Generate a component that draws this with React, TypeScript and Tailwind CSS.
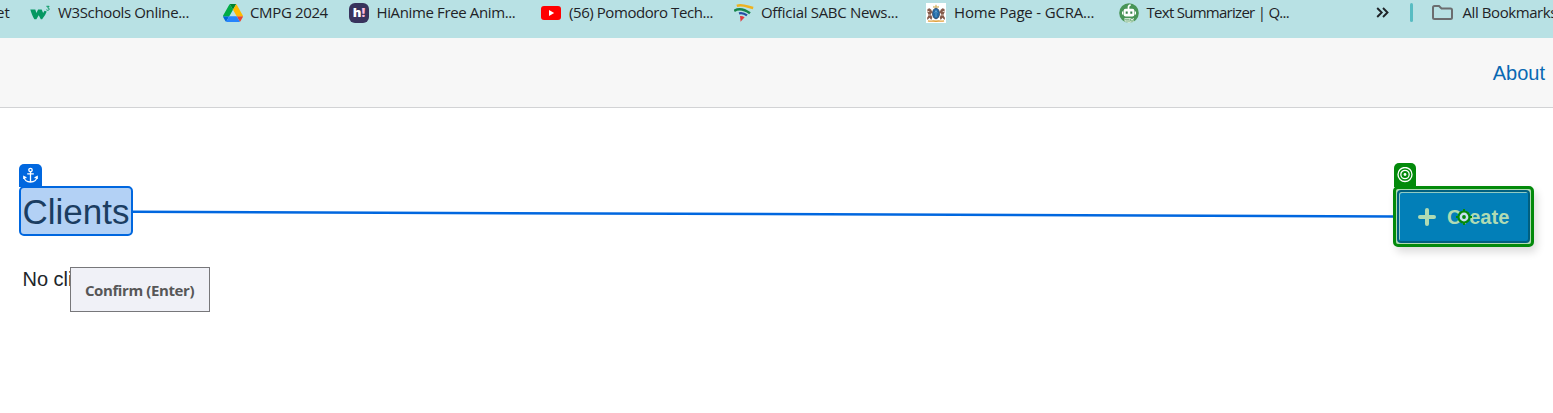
import type { ReactNode } from "react";

type Bookmark = { label: string; icon: ReactNode; width: string; tracking: string };

const W3Icon = () => (
  <svg width="20" height="20" viewBox="0 0 20 20" fill="none">
    <path d="M.3 6.500h5l1.100 3.600 1.700-3.600h3.600l1.400 3.600 1.400-2.300 2.200.8-1.600 3.500-3 4.200h-1.300l-2.100-4-2.300 4H4.400C2.500 13.500 1.300 9.500.3 6.500z" fill="#059862" />
    <path d="M16.400 3.300h2.700l-1.400 1.600c2.200 0 1.900 2.600-.2 2.400-.5 0-.9-.3-1.200-.7" stroke="#059862" strokeWidth="1" />
  </svg>
);

const DriveIcon = () => (
  <svg width="20" height="20" viewBox="0 0 87.3 78">
    <path d="m6.6 66.85 3.85 6.65c.8 1.4 1.95 2.5 3.3 3.3l13.75-23.8H0c0 1.55.4 3.1 1.2 4.5z" fill="#0066da" />
    <path d="M43.65 25 29.9 1.2c-1.35.8-2.5 1.9-3.3 3.3L1.2 48.5C.4 49.9 0 51.45 0 53h27.5z" fill="#00ac47" />
    <path d="M73.55 76.8c1.35-.8 2.5-1.9 3.3-3.3l9.25-16c.8-1.4 1.2-2.95 1.2-4.5H59.8l5.85 11.5z" fill="#ea4335" />
    <path d="M43.65 25 57.4 1.2C56.05.4 54.5 0 52.9 0H34.4c-1.6 0-3.15.45-4.5 1.2z" fill="#00832d" />
    <path d="M59.8 53H27.5L13.75 76.8c1.35.8 2.9 1.2 4.5 1.2h50.8c1.6 0 3.15-.45 4.5-1.2z" fill="#2684fc" />
    <path d="M73.4 26.5 60.7 4.5c-.8-1.4-1.95-2.5-3.3-3.3L43.65 25 59.8 53h27.45c0-1.55-.4-3.1-1.2-4.5z" fill="#ffba00" />
  </svg>
);

const AnimeIcon = () => (
  <span className="flex h-5 w-5 items-center justify-center rounded-[6px] bg-[#38335d] pb-px font-['Open_Sans',sans-serif] text-[13px] leading-none font-extrabold text-white">
    h<span className="text-[#ffbade]">!</span>
  </span>
);

const VideoIcon = () => (
  <svg width="20" height="20" viewBox="0 0 20 20">
    <rect y="3" width="20" height="14" rx="3" fill="#f00" />
    <path d="M8 7v6l5.2-3z" fill="#fff" />
  </svg>
);

const SabcIcon = () => (
  <svg width="20" height="20" viewBox="0 0 20 20" fill="none">
    <path d="M2.800 2.800C8 .8 13 3.600 19.200 5" stroke="#eeb220" strokeWidth="2.500" />
    <path d="M.2 7.800C5 5 10.500 6.300 16 10.300" stroke="#16854b" strokeWidth="2.500" />
    <path d="M5 10.400c2.800-.8 5.300 0 8 2" stroke="#264fa5" strokeWidth="2.300" />
    <path d="M6 13c1.800-.2 3 .2 4.600 1.200L6.600 18.800z" fill="#e13b41" />
  </svg>
);

const CrestIcon = () => (
  <svg width="20" height="20" viewBox="0 0 20 20" fill="none">
    <path fill="#fff" d="M0 0h20v20H0z" />
    <path d="m7 4.800.2-2 1.500.7L10 1.200l1.300 2.300 1.500-.7.2 2z" fill="#dcc17c" />
    <path d="m1.500 6 2-.8 1.800 1.500 1 2.500-1.500 2 1.500 3.300-1 2.500-1.800-2.200L1.500 17 1 15l1.700-3L1.300 9zM18.500 6l-2-.8-1.800 1.500-1 2.500 1.500 2-1.500 3.300 1 2.500 1.800-2.200 2 2.200.5-2-1.700-3 1.400-3z" fill="#855b4b" />
    <path d="M1.300 8.500h2M16.700 8.500h2M3.200 12h1.500M15.300 12h1.500" stroke="#e4d4c9" />
    <ellipse cx="10" cy="10.500" rx="3.500" ry="5.300" fill="#236ba8" stroke="#303c55" strokeWidth=".8" />
    <path d="M10 7v7M8.500 9.500 10 8l1.500 1.500" stroke="#64a5d2" strokeWidth=".8" />
    <path d="M2 17.800c3 1 4-.3 8 .5 4-.8 5 .5 8-.5" stroke="#e1a03b" strokeWidth="1.400" />
  </svg>
);

const BotIcon = () => (
  <svg width="20" height="20" viewBox="0 0 20 20" fill="none">
    <circle cx="10" cy="10" r="9.800" fill="#499557" />
    <path d="M9.500 6V4q0-1.700 2.200-2" stroke="#fff" strokeWidth="1.700" />
    <rect x="4.600" y="5.800" width="10.800" height="7.800" rx="2" fill="#fff" />
    <path d="M3.600 8.500v3M16.400 8.500v3" stroke="#fff" strokeWidth="1.200" />
    <path d="M7.700 8.500v2.300M12.300 8.500v2.300" stroke="#38814a" strokeWidth="2" />
    <path d="M5.500 15h9.500v3.500L10 20l-4.500-1.500z" fill="#e2f0e3" />
    <path d="M6 16.300h4.500M6.500 18h5" stroke="#499557" strokeWidth=".7" />
    <circle cx="13" cy="16.700" r="1.500" stroke="#499557" strokeWidth=".8" />
  </svg>
);

const bookmarks: Bookmark[] = [
  { label: "W3Schools Online...", icon: <W3Icon />, width: "w-[193px]", tracking: "tracking-[-0.36px]" },
  { label: "CMPG 2024", icon: <DriveIcon />, width: "w-[126px]", tracking: "tracking-[-0.36px] -ml-px" },
  { label: "HiAnime Free Anim...", icon: <AnimeIcon />, width: "w-[192px]", tracking: "tracking-[-0.37px] -ml-[0.5px]" },
  { label: "(56) Pomodoro Tech...", icon: <VideoIcon />, width: "w-[193px]", tracking: "tracking-[-0.43px]" },
  { label: "Official SABC News...", icon: <SabcIcon />, width: "w-[192px]", tracking: "tracking-[-0.31px] -ml-px" },
  { label: "Home Page - GCRA...", icon: <CrestIcon />, width: "w-[193px]", tracking: "tracking-[-0.18px]" },
  { label: "Text Summarizer | Q...", icon: <BotIcon />, width: "w-[257px]", tracking: "tracking-[-0.72px] -ml-[0.5px]" },
];

function BookmarksBar() {
  return (
    <div className="flex h-[38px] items-start bg-[#b8e1e4] pt-[3px] font-['Open_Sans',sans-serif] text-[15px] leading-[18px] whitespace-nowrap text-[#1f2327]">
      <span className="flex w-[30px] shrink-0">
        <span className="-ml-1">et</span>
      </span>
      {bookmarks.map((b) => (
        <div key={b.label} className={`flex shrink-0 gap-2 ${b.width}`}>
          <span className="h-5 w-5 shrink-0">{b.icon}</span>
          <span className={b.tracking}>{b.label}</span>
        </div>
      ))}
      <svg className="shrink-0" width="14" height="20" viewBox="0 0 14 20" fill="none" stroke="#1f2327" strokeWidth="1.9">
        <path d="m1.200 5 4.500 4.500L1.200 14M7 5l4.500 4.500L7 14" />
      </svg>
      <span className="ml-5 h-[19px] w-[3px] shrink-0 rounded-full bg-[#58bcc2]" />
      <svg className="ml-[19px] shrink-0" width="21" height="20" viewBox="0 0 21 20" fill="none" stroke="#6b6d6f" strokeWidth="2">
        <path d="M1 4.500q0-1.500 1.500-1.500H7l2.500 2.500h9q1.500 0 1.500 1.500v7.500q0 1.500-1.500 1.500h-16Q1 16 1 14.500z" />
      </svg>
      <span className="ml-[9.500px] tracking-[-0.42px]">All Bookmarks</span>
    </div>
  );
}

function AnchorTag() {
  return (
    <span className="absolute -top-[24px] -left-[2px] flex h-[23px] w-[22.5px] items-center justify-center rounded-t-[5px] bg-[#0067df]">
      <svg width="15" height="17" viewBox="0 0 15 17" fill="none" stroke="#fff" strokeWidth="1.3">
        <circle cx="7.500" cy="3" r="1.700" />
        <path d="M7.500 4.700V15M4.200 6.800h6.600M1 9.500c.3 3.500 3 5.500 6.500 5.500s6.200-2 6.500-5.500M.8 12V9.500l2.600 1.300M14.200 12V9.500l-2.600 1.300" />
      </svg>
    </span>
  );
}

function TargetTag() {
  return (
    <span className="absolute -top-[26px] -left-[2px] flex h-[24px] w-[22px] items-center justify-center rounded-t-[5px] bg-[#038a0b]">
      <svg width="16" height="16" viewBox="0 0 16 16" fill="none" stroke="#fff" strokeWidth="1.3">
        <circle cx="8" cy="7.500" r="7" />
        <circle cx="8" cy="7.500" r="4.200" />
        <circle cx="8" cy="7.500" r="1.400" fill="#fff" stroke="none" />
      </svg>
    </span>
  );
}

export default function App() {
  return (
    <div className="flex h-[413px] w-full flex-col overflow-hidden bg-white font-['Liberation_Sans',Arial,sans-serif]">
      <BookmarksBar />
      <header className="flex h-[70px] items-center justify-end border-b border-[#d2d3d5] bg-[#f7f7f7] pr-2">
        <a className="text-[20px] leading-6 text-[#0969b3]">About</a>
      </header>
      <main className="relative pt-[78px] pr-[19px] pl-[19px]">
        <div className="flex items-start">
          <div className="relative h-[50px] w-[113.500px] shrink-0 rounded-[5px] border-[2.500px] border-[#0067df] bg-[#b3d1f5]">
            <AnchorTag />
            <h1 className="pt-px pl-[1.500px] text-[35px] leading-[46px] font-normal text-[#1b3d61]">Clients</h1>
          </div>
          <svg className="h-[61px] min-w-0 flex-1" viewBox="0 0 1262 61" preserveAspectRatio="none">
            <path d="M0 25.700 1262 30.500" stroke="#0067df" strokeWidth="2.500" />
          </svg>
          <div className="relative h-[61px] w-[141px] shrink-0 rounded-[5px] border-[3px] border-[#038a0b] bg-[#b0dbb3] p-px shadow-[3px_5px_9px_rgba(0,0,0,0.14)]">
            <TargetTag />
            <button className="relative flex h-[53px] w-full items-center rounded-[4px] border-2 border-[#005f80] bg-[#027fb8] pl-[18.500px] text-[20px] font-bold text-[#b0dbb3] shadow-[inset_1px_1px_0_#8fcbc3]">
              <svg width="18" height="18" viewBox="0 0 18 18" fill="none" stroke="#b0dbb3" strokeWidth="4" strokeLinecap="round">
                <path d="M9 2v14M2 9h14" />
              </svg>
              <span className="ml-[11.500px]">Create</span>
              <svg className="absolute top-[16px] left-[55.500px]" width="18" height="18" viewBox="0 0 18 18" fill="none">
                <circle cx="9" cy="9" r="5.500" fill="#c9dfef" stroke="#038a0b" strokeWidth="2.200" />
                <circle cx="9" cy="9" r="1.900" fill="#038a0b" />
                <path d="M9 1v3M9 14v3M1 9h3M14 9h3" stroke="#038a0b" strokeWidth="2" />
              </svg>
            </button>
          </div>
        </div>
        <p className="mt-5 pl-[3.500px] text-[20px] leading-6 text-[#212529]">No clients</p>
        <div className="absolute top-[159px] left-[70px] flex h-[45px] w-[140px] items-center justify-center border border-[#77777a] bg-[#f0f1f7] pt-[2px] pr-px font-['Open_Sans',sans-serif] text-[15px] font-bold whitespace-nowrap text-[#575757]">
          <span className="tracking-[-0.400px]">Confirm (Enter)</span>
        </div>
      </main>
    </div>
  );
}
